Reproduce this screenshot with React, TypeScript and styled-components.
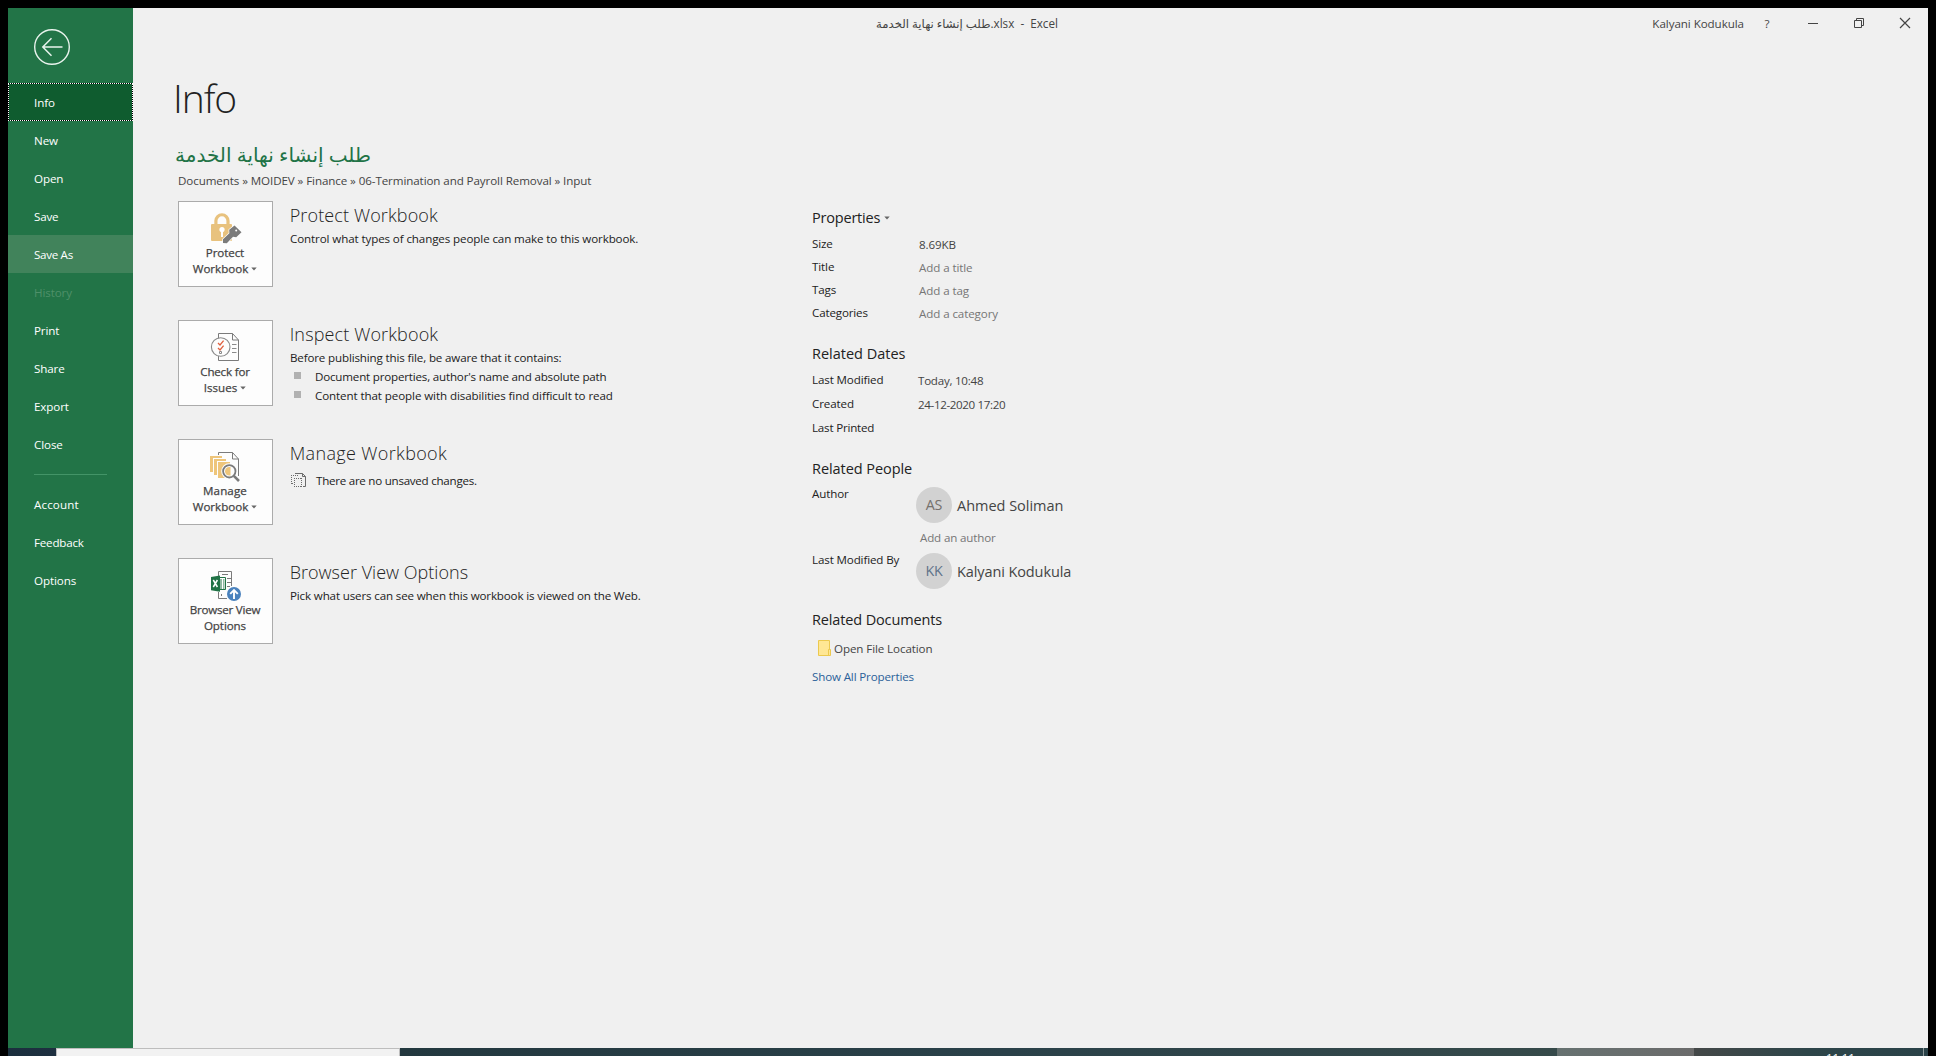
import React from 'react';
import styled, { createGlobalStyle } from 'styled-components';

const GlobalStyle = createGlobalStyle`
  * { box-sizing: border-box; }
  html, body { margin: 0; padding: 0; background: #000; overflow: hidden; }
  body { font-family: "Open Sans", "Noto Sans", "DejaVu Sans", sans-serif; font-size: 11.6px; line-height: 16px; color: #222; }
  ul, h1, h2, h3, p { margin: 0; padding: 0; font-weight: 400; list-style: none; }
  button { font: inherit; color: inherit; background: none; border: 0; padding: 0; }
  svg { display: block; overflow: visible; flex: none; }
`;

const Screen = styled.div`
  width: 1936px;
  height: 1056px;
  padding: 8px 8px 0;
  display: flex;
  flex-direction: column;
  white-space: nowrap;
  overflow: hidden;
`;
const AppWindow = styled.div`
  display: grid;
  grid-template-columns: 125px 1fr;
  height: 1040px;
  background: #f0f0f0;
`;

/* Sidebar */
const Sidebar = styled.nav`
  background: #227447;
  display: flex;
  flex-direction: column;
`;
const BackButton = styled.button`
  margin: 21px 0 18px 26px;
  width: 36px;
  height: 36px;
`;
const NavItem = styled.button<{ $state?: string; $track?: number }>`
  height: 38px;
  line-height: 36px;
  text-align: left;
  padding: 2px 0 0 26px;
  letter-spacing: ${p => p.$track ?? -0.1}px;
  color: ${p => (p.$state === 'disabled' ? '#4f9069' : '#fff')};
  background: ${p => (p.$state === 'hover' ? '#41835b' : 'transparent')};
  ${p => p.$state === 'current' && `
    border: 1px dotted #fff;
    padding: 1px 0 0 25px;
    background: linear-gradient(#0f5c2f, #0f5c2f) padding-box, #000 border-box;
  `}
`;
const NavRule = styled.div`
  height: 1px;
  width: 73px;
  background: #439467;
  margin: 11px 0 10px 26px;
`;

/* Title bar */
const Main = styled.main`
  display: flex;
  flex-direction: column;
`;
const TitleBar = styled.header`
  height: 32px;
  display: flex;
  align-items: center;
  padding-left: 743px;
  color: #444;
`;
const DocTitle = styled.div`
  font-size: 11.7px;
  white-space: pre;
  padding-bottom: 2px;
`;
const UserName = styled.div`
  margin-left: auto;
  letter-spacing: -0.06px;
`;
const CaptionButton = styled.button`
  width: 46px;
  height: 32px;
  display: flex;
  align-items: center;
  justify-content: center;
`;

/* Page */
const Page = styled.section`
  padding: 31px 0 0 43px;
`;
const PageTitle = styled.h1`
  font-size: 39px;
  font-weight: 300;
  line-height: 54px;
  letter-spacing: -1.1px;
  margin-left: -3px;
`;
const FileName = styled.h2`
  margin: 15px 0 0 -1px;
  font-size: 20px;
  line-height: 30px;
  color: #217346;
`;
const Breadcrumb = styled.p`
  margin: 3px 0 12px 2px;
  letter-spacing: -0.09px;
  color: #444;
`;
const Columns = styled.div`
  display: grid;
  grid-template-columns: 634px 300px;
  padding-left: 2px;
`;
const Actions = styled.div`
  display: flex;
  flex-direction: column;
  gap: 33px;
`;
const Action = styled.div`
  display: flex;
  gap: 16px;
  height: 86px;
`;
const Tile = styled.button`
  width: 95px;
  height: 86px;
  border: 1px solid #ababab;
  background: #fdfdfd;
  display: flex;
  flex-direction: column;
  align-items: center;
  padding: 10px 1px 0 0;
  color: #444;
  -webkit-text-stroke: 0.25px #444;
`;
const TileLabel = styled.span<{ $track: number }>`
  display: flex;
  align-items: center;
  gap: 3px;
  letter-spacing: ${p => p.$track}px;
  height: 16px;
`;
const IconSlot = styled.span`
  margin-bottom: 1px;
`;
const ActionText = styled.div`
  padding-top: 2px;
`;
const ActionTitle = styled.h3<{ $track: number }>`
  margin-left: 0.7px;
  font-size: 18px;
  line-height: 24px;
  font-weight: 300;
  letter-spacing: ${p => p.$track}px;
`;
const Description = styled.p<{ $track: number }>`
  margin: 4px 0 1px 1px;
  letter-spacing: ${p => p.$track}px;
`;
const Bullet = styled.li<{ $track: number }>`
  display: flex;
  align-items: flex-start;
  gap: 14px;
  padding-left: 5px;
  line-height: 19px;
  letter-spacing: ${p => p.$track}px;
  &::before { content: ''; width: 7px; height: 7px; margin-top: 5px; background: #b1b1b1; }
`;
const Versions = styled.div`
  display: flex;
  gap: 10px;
  margin: 8px 0 0 2px;
  letter-spacing: -0.26px;
`;

/* Properties */
const Details = styled.aside`
  padding-top: 5px;
`;
const GroupTitle = styled.h3<{ $track: number; $top?: number; $bottom?: number }>`
  display: flex;
  align-items: center;
  gap: 4px;
  height: 22px;
  padding-top: 2px;
  font-size: 14.5px;
  line-height: 20px;
  letter-spacing: ${p => p.$track}px;
  margin-top: ${p => p.$top ?? 0}px;
  margin-bottom: ${p => p.$bottom ?? 4}px;
`;
const PropertyRow = styled.div<{ $height: number; $indent: number; $track?: number }>`
  display: grid;
  grid-template-columns: ${p => p.$indent}px 1fr;
  height: ${p => p.$height}px;
  line-height: ${p => p.$height}px;
  letter-spacing: ${p => p.$track ?? -0.12}px;
`;
const Value = styled.span<{ $muted?: boolean; $track?: number }>`
  padding-top: 1px;
  color: ${p => (p.$muted ? '#767676' : '#444')};
  letter-spacing: ${p => p.$track ?? -0.1}px;
`;
const PersonRow = styled.div<{ $height: number }>`
  display: grid;
  grid-template-columns: 104px 1fr;
  height: ${p => p.$height}px;
`;
const PersonLabel = styled.span`
  line-height: 23px;
  letter-spacing: -0.13px;
`;
const Person = styled.div`
  display: flex;
  align-items: center;
  gap: 5px;
  margin-top: 5px;
  height: 36px;
`;
const PersonName = styled.span<{ $track: number }>`
  padding-top: 2px;
  font-size: 14.5px;
  color: #444;
  letter-spacing: ${p => p.$track}px;
`;
const Avatar = styled.span<{ $tint: string }>`
  width: 36px;
  height: 36px;
  line-height: 35px;
  border-radius: 50%;
  background: #d2d2d2;
  color: ${p => p.$tint};
  text-align: center;
  font-size: 14.3px;
  letter-spacing: -0.3px;
`;
const AddAuthor = styled.p`
  margin: 7px 0 0 4px;
  color: #767676;
  letter-spacing: -0.15px;
`;
const FileLocation = styled.div`
  display: flex;
  gap: 3px;
  height: 17px;
  line-height: 18px;
  padding-left: 6px;
  color: #444;
  letter-spacing: -0.1px;
`;
const ShowAll = styled.p`
  margin-top: 12px;
  color: #2a6099;
  letter-spacing: -0.15px;
`;

/* Taskbar */
const Taskbar = styled.footer`
  display: flex;
  height: 8px;
  overflow: hidden;
  background: linear-gradient(90deg, #1b2f3e 0, #1e3040 48px, #23383f 392px, #2a4149 1000px, #364a4a 1549px, #444848 1686px, #2d4549 1800px, #2a4248 100%);
`;
const SearchBox = styled.div`
  margin-left: 48px;
  width: 344px;
  height: 12px;
  background: #f2f2f2;
  border: 1px solid #bdbdbd;
`;
const ActiveTask = styled.div`
  margin-left: auto;
  width: 137px;
  height: 8px;
  background: linear-gradient(90deg, #667170, #6b6b6b);
`;
const Clock = styled.div`
  width: 229px;
  padding: 2px 0 0 132px;
  height: 8px;
  color: #fff;
  letter-spacing: -0.2px;
`;
const ShowDesktop = styled.div`
  width: 5px;
  border-left: 1px solid #8a9798;
`;

const Caret = () => (
  <svg width="6" height="4" viewBox="0 0 6 4"><path d="M0.3 0.5H5.700L3 3.500Z" fill="#666" /></svg>
);

const BackIcon = () => (
  <svg width="36" height="36" fill="none" stroke="#e9f3ed">
    <circle cx="18" cy="18" r="17.3" strokeWidth="1.4" />
    <path d="M28.5 18H8.5M17.5 9.3L8.8 18L17.5 26.7" strokeWidth="1.5" />
  </svg>
);

const LockIcon = () => (
  <svg width="31" height="32" viewBox="0 0 31 32">
    <path d="M5.9 12.5V8.8a6 6 0 0 1 12.1 0V12.5" fill="none" stroke="#e8c27e" strokeWidth="3.2" />
    <path d="M2 12H21a1 1 0 0 1 1 1V28a1 1 0 0 1-1 1H2a1 1 0 0 1-1-1V13a1 1 0 0 1 1-1Z" fill="#e8c27e" />
    <circle cx="12" cy="17.5" r="2.6" fill="#fff" />
    <path d="M11 18h2v7h-2z" fill="#fff" />
    <path d="M24.5 13.5L31.5 20.2L26.2 25.3L23 24.8L16.8 31.2L13 31V27.3L19.4 21.2L19.2 17.8Z" fill="#7b7b7b" stroke="#fdfdfd" strokeWidth="1.4" paintOrder="stroke" />
    <circle cx="26.2" cy="18.6" r="1" fill="#fff" />
  </svg>
);

const CheckIcon = () => (
  <svg width="31" height="32" viewBox="0 0 31 32">
    <path d="M8.5 9V2.5H22.5L28.5 9V29.5H8.5V25M22.5 2.5V9H28.5" fill="none" stroke="#7b7b7b" />
    <path d="M22 13.5h4.5M22 17.5h4.5M22 21.5h4.5" stroke="#8a8a8a" fill="none" />
    <circle cx="10.7" cy="16" r="9.3" fill="#fdfdfd" stroke="#8a8a8a" strokeWidth="1.1" />
    <path d="M8 12L10 14L13.6 9.6M8 17L10 19L13.6 14.6" fill="none" stroke="#e0603f" strokeWidth="1.3" />
    <path d="M9.5 20.5h2v2h-2z" fill="none" stroke="#8a8a8a" />
  </svg>
);

const ManageIcon = () => (
  <svg width="31" height="32" viewBox="0 0 31 32">
    <path d="M8.5 5V2.5H22.5L28.5 9V26M22.5 2.5V9H28.5" fill="none" stroke="#7b7b7b" />
    <g fill="#eec57a" stroke="#fdfdfd" strokeWidth="2" paintOrder="stroke">
      <path d="M0 6h12v16H0z" />
      <path d="M4 9h12v16H4z" />
      <path d="M8 12h12v16H8z" />
    </g>
    <circle cx="19.3" cy="21.3" r="6.3" fill="#fdfdfd" stroke="#fdfdfd" strokeWidth="3.6" />
    <path d="M19.3 17a4.3 4.3 0 0 0 0 8.6h1.2V17z" fill="#eec57a" />
    <circle cx="19.3" cy="21.3" r="6.2" fill="none" stroke="#7b7b7b" strokeWidth="1.8" />
    <path d="M23.8 25.8L29 31" stroke="#7b7b7b" strokeWidth="2.6" />
  </svg>
);

const BrowserIcon = () => (
  <svg width="31" height="32" viewBox="0 0 31 32">
    <path d="M8.5 7V2.5H21.5V17M8.5 23V29.5H17" fill="none" stroke="#7b7b7b" />
    <path d="M12 5.5h6M17 9.5h4M17 13.5h4M17 17.5h3M11.500 27v-2" fill="none" stroke="#7b7b7b" />
    <path d="M8.500 8.500H15.500V20.500H8.500z" fill="#fff" stroke="#217346" />
    <path d="M10 11h2M10 13h2M10 15h2M10 17h2M10 19h2M13 11h1.500M13 13h1.500M13 15h1.500M13 17h1.500M13 19h1.500" stroke="#217346" fill="none" />
    <path d="M1 8L10 6.500V22.800L1 21.200Z" fill="#217346" />
    <path d="M3.300 11L7.400 18M7.400 11L3.300 18" stroke="#fff" strokeWidth="1.500" />
    <circle cx="24" cy="25" r="7" fill="#4a82bd" stroke="#fdfdfd" strokeWidth="1.400" paintOrder="stroke" />
    <path d="M24 30V21.500M20.200 24.800L24 21L27.800 24.800" fill="none" stroke="#fff" strokeWidth="1.900" />
  </svg>
);

const VersionsIcon = () => (
  <svg width="15" height="15" viewBox="0 0 15 15" fill="none" stroke="#6b6b6b">
    <path d="M4 0.500H11.500L14.500 3.500V13.500H12M11.500 0.500V3.500H14.500" />
    <path d="M0.500 2V11M0 2.500H8M1 10.500H3M3.500 5V14M3 5.500H11M3 13.500H11M10.500 5V14" strokeDasharray="1 1" />
  </svg>
);

const FolderIcon = () => (
  <svg width="13" height="16" viewBox="0 0 13 16">
    <path d="M0.500 0.500H11.500V9.500H12.500V15.500H0.500Z" fill="#ffe794" stroke="#ecc94e" />
    <path d="M10.500 15V9.500H12" fill="none" stroke="#ecc94e" />
  </svg>
);

const NAV_TOP = [
  { label: 'Info', state: 'current' },
  { label: 'New' },
  { label: 'Open' },
  { label: 'Save', track: -0.2 },
  { label: 'Save As', state: 'hover', track: -0.3 },
  { label: 'History', state: 'disabled' },
  { label: 'Print' },
  { label: 'Share' },
  { label: 'Export' },
  { label: 'Close' },
];
const NAV_BOTTOM = [
  { label: 'Account', track: 0.14 },
  { label: 'Feedback', track: -0.2 },
  { label: 'Options' },
];

type ActionTileProps = { icon: React.ReactNode; lines: [string, string]; tracks: [number, number]; menu?: boolean };
const ActionTile = ({ icon, lines, tracks, menu }: ActionTileProps) => (
  <Tile>
    <IconSlot>{icon}</IconSlot>
    <TileLabel $track={tracks[0]}>{lines[0]}</TileLabel>
    <TileLabel $track={tracks[1]}>{lines[1]}{menu && <Caret />}</TileLabel>
  </Tile>
);

export default function App() {
  return (
    <Screen>
      <GlobalStyle />
      <AppWindow>
        <Sidebar>
          <BackButton aria-label="Back"><BackIcon /></BackButton>
          {NAV_TOP.map(n => <NavItem key={n.label} $state={n.state} $track={n.track}>{n.label}</NavItem>)}
          <NavRule />
          {NAV_BOTTOM.map(n => <NavItem key={n.label} $track={n.track}>{n.label}</NavItem>)}
        </Sidebar>
        <Main>
          <TitleBar>
            <DocTitle>طلب إنشاء نهاية الخدمة.xlsx  -  Excel</DocTitle>
            <UserName>Kalyani Kodukula</UserName>
            <CaptionButton>?</CaptionButton>
            <CaptionButton aria-label="Minimize">
              <svg width="10" height="10"><path d="M0 4.500H10" stroke="#444" /></svg>
            </CaptionButton>
            <CaptionButton aria-label="Restore">
              <svg width="10" height="10" fill="none" stroke="#444"><path d="M0.500 2.500H7.500V9.500H0.500ZM2.500 2.500V0.500H9.500V7.500H7.500" transform="translate(0 -1)" /></svg>
            </CaptionButton>
            <CaptionButton aria-label="Close">
              <svg width="10" height="10"><path d="M0 -1L10 9M10 -1L0 9" stroke="#444" strokeWidth="1.200" /></svg>
            </CaptionButton>
          </TitleBar>
          <Page>
            <PageTitle>Info</PageTitle>
            <FileName>طلب إنشاء نهاية الخدمة</FileName>
            <Breadcrumb>Documents » MOIDEV » Finance » 06-Termination and Payroll Removal » Input</Breadcrumb>
            <Columns>
              <Actions>
                <Action>
                  <ActionTile icon={<LockIcon />} lines={['Protect', 'Workbook']} tracks={[-0.1, 0]} menu />
                  <ActionText>
                    <ActionTitle $track={0.13}>Protect Workbook</ActionTitle>
                    <Description $track={-0.11}>Control what types of changes people can make to this workbook.</Description>
                  </ActionText>
                </Action>
                <Action>
                  <ActionTile icon={<CheckIcon />} lines={['Check for', 'Issues']} tracks={[-0.2, 0]} menu />
                  <ActionText>
                    <ActionTitle $track={0.14}>Inspect Workbook</ActionTitle>
                    <Description $track={-0.15}>Before publishing this file, be aware that it contains:</Description>
                    <ul>
                      <Bullet $track={-0.19}>Document properties, author's name and absolute path</Bullet>
                      <Bullet $track={-0.1}>Content that people with disabilities find difficult to read</Bullet>
                    </ul>
                  </ActionText>
                </Action>
                <Action>
                  <ActionTile icon={<ManageIcon />} lines={['Manage', 'Workbook']} tracks={[0.1, 0]} menu />
                  <ActionText>
                    <ActionTitle $track={0.36}>Manage Workbook</ActionTitle>
                    <Versions><VersionsIcon />There are no unsaved changes.</Versions>
                  </ActionText>
                </Action>
                <Action>
                  <ActionTile icon={<BrowserIcon />} lines={['Browser View', 'Options']} tracks={[-0.22, -0.1]} />
                  <ActionText>
                    <ActionTitle $track={0.02}>Browser View Options</ActionTitle>
                    <Description $track={-0.15}>Pick what users can see when this workbook is viewed on the Web.</Description>
                  </ActionText>
                </Action>
              </Actions>
              <Details>
                <GroupTitle $track={-0.2}>Properties<Caret /></GroupTitle>
                <PropertyRow $height={23} $indent={107}>Size<Value>8.69KB</Value></PropertyRow>
                <PropertyRow $height={23} $indent={107}>Title<Value $muted>Add a title</Value></PropertyRow>
                <PropertyRow $height={23} $indent={107}>Tags<Value $muted>Add a tag</Value></PropertyRow>
                <PropertyRow $height={23} $indent={107} $track={-0.15}>Categories<Value $muted>Add a category</Value></PropertyRow>

                <GroupTitle $track={-0.01} $top={18}>Related Dates</GroupTitle>
                <PropertyRow $height={24} $indent={106}>Last Modified<Value $track={-0.25}>Today, 10:48</Value></PropertyRow>
                <PropertyRow $height={24} $indent={106}>Created<Value $track={-0.37}>24-12-2020 17:20</Value></PropertyRow>
                <PropertyRow $height={24} $indent={106} $track={-0.2}>Last Printed</PropertyRow>

                <GroupTitle $track={-0.06} $top={17} $bottom={3}>Related People</GroupTitle>
                <PersonRow $height={66}>
                  <PersonLabel>Author</PersonLabel>
                  <div>
                    <Person><Avatar $tint="#75706c">AS</Avatar><PersonName $track={-0.02}>Ahmed Soliman</PersonName></Person>
                    <AddAuthor>Add an author</AddAuthor>
                  </div>
                </PersonRow>
                <PersonRow $height={41}>
                  <PersonLabel>Last Modified By</PersonLabel>
                  <Person><Avatar $tint="#5f7389">KK</Avatar><PersonName $track={-0.1}>Kalyani Kodukula</PersonName></Person>
                </PersonRow>

                <GroupTitle $track={-0.14} $top={19} $bottom={10}>Related Documents</GroupTitle>
                <FileLocation><FolderIcon />Open File Location</FileLocation>
                <ShowAll>Show All Properties</ShowAll>
              </Details>
            </Columns>
          </Page>
        </Main>
      </AppWindow>
      <Taskbar>
        <SearchBox />
        <ActiveTask />
        <Clock>11:11</Clock>
        <ShowDesktop />
      </Taskbar>
    </Screen>
  );
}
